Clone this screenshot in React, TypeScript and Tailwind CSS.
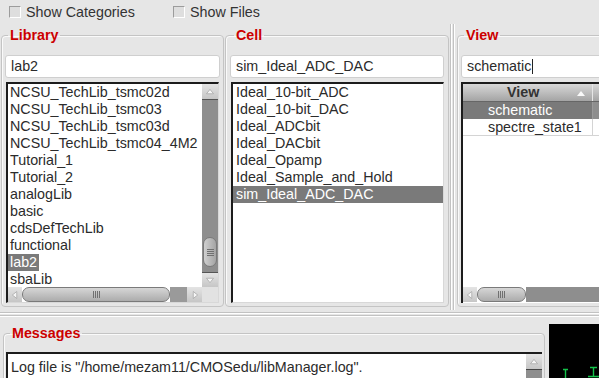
import React from 'react';

type Dir = 'up' | 'down' | 'left' | 'right';

const libraries = [
    'NCSU_TechLib_tsmc02d',
    'NCSU_TechLib_tsmc03',
    'NCSU_TechLib_tsmc03d',
    'NCSU_TechLib_tsmc04_4M2',
    'Tutorial_1',
    'Tutorial_2',
    'analogLib',
    'basic',
    'cdsDefTechLib',
    'functional',
    'lab2',
    'sbaLib',
];

const cells = [
    'Ideal_10-bit_ADC',
    'Ideal_10-bit_DAC',
    'Ideal_ADCbit',
    'Ideal_DACbit',
    'Ideal_Opamp',
    'Ideal_Sample_and_Hold',
    'sim_Ideal_ADC_DAC',
];

const Arrow: React.FC<{ dir: Dir; className?: string }> = ({ dir, className = '' }) => {
    const pts = {
        up: '4,10 8,5 12,10',
        down: '4,6 8,11 12,6',
        left: '10,4 5,8 10,12',
        right: '6,4 11,8 6,12',
    }[dir];
    return (
        <div className={`flex items-center justify-center flex-shrink-0 bg-gradient-to-b from-[#e4e4e4] to-[#c6c6c6] ${className}`}>
            <svg width="14" height="14" viewBox="0 0 16 16">
                <polygon points={pts} fill="#f6f6f6" stroke="#a0a0a0" strokeWidth="0.8" />
            </svg>
        </div>
    );
};

const Grip: React.FC<{ vertical?: boolean }> = ({ vertical }) => (
    <div className={`flex ${vertical ? 'flex-col gap-[1px]' : 'flex-row gap-[1px]'}`}>
        {[0, 1, 2, 3].map(i => (
            <div key={i} className={vertical ? 'w-[7px] h-[1px] bg-[#707070]' : 'w-[1px] h-[7px] bg-[#707070]'} />
        ))}
    </div>
);

const Checkbox: React.FC<{ label: string; className?: string }> = ({ label, className = '' }) => (
    <div className={`flex items-center ${className}`}>
        <div className="w-[12px] h-[12px] bg-[#dedede] border-t border-l border-[#9c9c9c] border-b border-r border-b-white border-r-white" />
        <span className="ml-[5px] text-[#333]">{label}</span>
    </div>
);

const Panel: React.FC<{ title: string; className?: string; legendClass?: string; children: React.ReactNode }> = ({ title, className = '', legendClass = '', children }) => (
    <fieldset className={`flex-shrink-0 min-w-0 border border-[#c4c4c4] rounded-[4px] shadow-[inset_1px_1px_0_#fafafa] ${className}`}>
        <legend className={`px-[2px] text-[#cc0000] font-bold leading-[16px] ${legendClass}`}>{title}</legend>
        {children}
    </fieldset>
);

const TextField: React.FC<{ value: string; caret?: boolean }> = ({ value, caret }) => (
    <div className="mt-[12px] h-[23px] bg-white border border-[#cfcfcf] rounded-[3px] flex items-center pl-[5px] text-[#2b2b2b]">
        {value}
        {caret && <span className="w-[1px] h-[15px] bg-[#222] ml-[1px]" />}
    </div>
);

function App() {
    return (
        <div
            className="w-[599px] h-[378px] overflow-hidden bg-[#e6e6e6] text-[14.3px] leading-[17px] text-[#2b2b2b] flex flex-col"
            style={{ fontFamily: '"Liberation Sans", Arial, sans-serif' }}
        >
            {/* option checkboxes */}
            <div className="h-[24px] flex items-center pl-[9px] flex-shrink-0">
                <Checkbox label="Show Categories" className="w-[164px]" />
                <Checkbox label="Show Files" />
            </div>

            {/* library / cell / view browsers */}
            <div className="h-[283px] flex pt-[3px] flex-shrink-0">
                <Panel title="Library" className="ml-[1px] w-[223px] px-[3px] pb-[2px]" legendClass="ml-[3px]">
                    <TextField value="lab2" />
                    <div className="mt-[4px] mx-[1px] h-[221px] bg-white border-t-2 border-l-2 border-[#1c1c1c] border-r border-b border-r-[#d8d8d8] border-b-[#d8d8d8] flex flex-col">
                        <div className="flex h-[203px]">
                            <div className="flex-1 overflow-hidden">
                                {libraries.map(lib => (
                                    <div key={lib} className="h-[17px] whitespace-nowrap">
                                        <span className={`px-[2px] inline-block h-[17px] ${lib === 'lab2' ? 'bg-[#7a7a7a] text-white' : ''}`}>{lib}</span>
                                    </div>
                                ))}
                            </div>
                            <div className="w-[16px] flex flex-col bg-[#8e8e8e]">
                                <Arrow dir="up" className="h-[16px] border-b border-[#555]" />
                                <div className="flex-1 flex flex-col justify-end pb-[5px] px-[1px]">
                                    <div className="h-[30px] rounded-[7px] bg-gradient-to-r from-[#d0d0d0] to-[#a4a4a4] border border-[#7a7a7a] flex items-center justify-center">
                                        <Grip vertical />
                                    </div>
                                </div>
                                <Arrow dir="down" className="h-[15px] border-t border-[#555]" />
                            </div>
                        </div>
                        <div className="flex h-[15px]">
                            <Arrow dir="left" className="w-[14px]" />
                            <div className="w-[148px] flex-shrink-0 rounded-[7px] bg-gradient-to-b from-[#d6d6d6] to-[#acacac] border border-[#7a7a7a] flex items-center justify-center">
                                <Grip />
                            </div>
                            <div className="w-[17px] flex-shrink-0 bg-[#9a9a9a]" />
                            <Arrow dir="right" className="w-[15px]" />
                            <div className="flex-1 bg-[#e2e2e2]" />
                        </div>
                    </div>
                </Panel>

                <Panel title="Cell" className="ml-[1px] w-[224px] px-[4px] pb-[2px]" legendClass="ml-[4px]">
                    <TextField value="sim_Ideal_ADC_DAC" />
                    <div className="mt-[4px] ml-[1px] h-[221px] bg-white border-t-2 border-l-2 border-[#1c1c1c] border-r border-b border-r-[#d8d8d8] border-b-[#d8d8d8] overflow-hidden">
                        {cells.map(cell => (
                            <div key={cell} className={`h-[17px] pl-[3px] whitespace-nowrap ${cell === 'sim_Ideal_ADC_DAC' ? 'bg-[#7a7a7a] text-white' : ''}`}>{cell}</div>
                        ))}
                    </div>
                </Panel>

                {/* sash */}
                <div className="w-[8px] flex-shrink-0 flex pl-[1px] gap-[1px] -mt-[3px] h-[286px]">
                    <div className="w-[2px] bg-[#c2c2c2] border-r border-white" />
                    <div className="w-[2px] bg-[#c2c2c2] border-r border-white" />
                </div>

                <Panel title="View" className="w-[160px] px-[3px] pb-[2px]" legendClass="ml-[3px]">
                    <TextField value="schematic" caret />
                    <div className="mt-[4px] h-[221px] bg-white border-t-2 border-l-2 border-[#1c1c1c] flex flex-col">
                        <div className="h-[203px] overflow-hidden">
                            <div className="flex h-[18px] bg-gradient-to-b from-[#d8d8d8] to-[#a4a4a4] border-b border-[#666]">
                                <div className="w-[130px] flex-shrink-0 flex items-center border-r border-[#e6e6e6]">
                                    <span className="ml-[44px] font-bold text-[#333]">View</span>
                                    <svg className="ml-auto mr-[7px]" width="8" height="6" viewBox="0 0 8 6">
                                        <polygon points="0,6 4,1 8,6" fill="#fafafa" />
                                    </svg>
                                </div>
                                <div className="flex-1" />
                            </div>
                            <div className="flex h-[17px] bg-[#7a7a7a] text-white">
                                <div className="w-[130px] flex-shrink-0 pl-[25px] border-r border-[#9a9a9a]">schematic</div>
                                <div className="flex-1 bg-[#8e8e8e]" />
                            </div>
                            <div className="flex h-[17px] border-b border-[#d4d4d4]">
                                <div className="w-[130px] flex-shrink-0 pl-[25px] border-r border-[#d4d4d4] whitespace-nowrap">spectre_state1</div>
                                <div className="flex-1" />
                            </div>
                        </div>
                        <div className="flex h-[15px]">
                            <Arrow dir="left" className="w-[14px]" />
                            <div className="w-[49px] flex-shrink-0 rounded-[7px] bg-gradient-to-b from-[#d6d6d6] to-[#acacac] border border-[#7a7a7a] flex items-center justify-center">
                                <Grip />
                            </div>
                            <div className="flex-1 bg-[#8e8e8e]" />
                        </div>
                    </div>
                </Panel>
            </div>

            {/* horizontal sash */}
            <div className="h-[14px] flex flex-col justify-center gap-[1px] flex-shrink-0">
                <div className="h-[2px] bg-[#c2c2c2] border-b border-white" />
                <div className="h-[2px] bg-[#c2c2c2] border-b border-white" />
            </div>

            {/* messages */}
            <div className="flex flex-1 min-h-0">
                <Panel title="Messages" className="ml-[3px] mt-[4px] w-[542px] px-[2px] h-[80px]" legendClass="ml-[4px]">
                    <div className="mt-[11px] h-[40px] bg-white border-t-2 border-l-2 border-[#1c1c1c] flex">
                        <div className="flex-1 pl-[3px] pt-[5px] whitespace-nowrap overflow-hidden">
                            <div className="h-[17px]">Log file is "/home/mezam11/CMOSedu/libManager.log".</div>
                            <div className="h-[17px]">Loading AMS library definitions from cds.lib file.</div>
                        </div>
                        <div className="w-[16px] flex-shrink-0 flex flex-col bg-[#8e8e8e]">
                            <Arrow dir="up" className="h-[16px] border-b border-[#444]" />
                        </div>
                    </div>
                </Panel>
                <div className="ml-[4px] mt-[3px] w-[50px] h-[60px] bg-black flex-shrink-0">
                    <svg width="50" height="60" viewBox="0 0 50 60">
                        <g stroke="#14c24a" strokeWidth="1.4" fill="none">
                            <path d="M14 45.5 H19 M16.5 45.5 V55" />
                            <path d="M41 43.5 H48 M44.5 43.5 V52 M39 52.5 H50" />
                        </g>
                    </svg>
                </div>
            </div>
        </div>
    );
}

export default App;
